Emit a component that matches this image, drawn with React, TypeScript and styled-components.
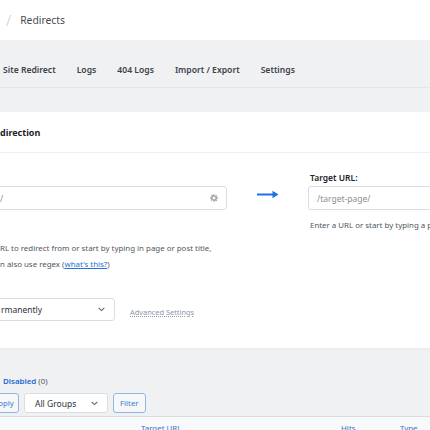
import React from 'react';
import styled, { createGlobalStyle } from 'styled-components';

const GlobalStyle = createGlobalStyle`
  html, body {
    margin: 0;
    padding: 0;
    background: #f0f1f3;
    overflow: hidden;
  }
  body {
    font-family: 'Noto Sans', 'Open Sans', sans-serif;
    color: #3c434a;
  }
`;

const Gear = () => (
  <svg width="8" height="8" viewBox="0 0 24 24" fill="#a9acb0">
    <path d="M10 1h4l.6 3.2 2 .9 2.7-1.9 2.8 2.8-1.9 2.7.9 2L24 10v4l-3.2.6-.9 2 1.9 2.7-2.8 2.8-2.7-1.9-2 .9L14 23h-4l-.6-3.2-2-.9-2.7 1.9-2.8-2.8 1.9-2.7-.9-2L0 14v-4l3.2-.6.9-2L2.2 4.7 5 1.9l2.7 1.9 2-.9z M12 8a4 4 0 1 0 0 8a4 4 0 1 0 0-8z" fillRule="evenodd" />
  </svg>
);

const Chevron = () => (
  <svg width="7" height="5" viewBox="0 0 10 6" fill="none">
    <path d="M1.5 1.2 5 4.6 8.5 1.2" stroke="#6b7178" strokeWidth="1.6" strokeLinecap="round" strokeLinejoin="round" />
  </svg>
);

const Arrow = () => (
  <svg width="22" height="9" viewBox="0 0 22 9" fill="none">
    <path d="M0 4.5h19" stroke="#1f6fe5" strokeWidth="2" />
    <path d="M15.5 0.8 21.5 4.5 15.5 8.2z" fill="#1f6fe5" />
  </svg>
);

const App: React.FC = () => {
  return (
    <>
      <GlobalStyle />
      <StyledPage>
        <StyledHeader>
          <StyledSlash>/</StyledSlash>
          <StyledTitle>Redirects</StyledTitle>
        </StyledHeader>

        <StyledNav>
          <StyledTab>Site Redirect</StyledTab>
          <StyledTab>Logs</StyledTab>
          <StyledTab>404 Logs</StyledTab>
          <StyledTab>Import / Export</StyledTab>
          <StyledTab>Settings</StyledTab>
        </StyledNav>

        <StyledCard>
          <StyledCardHead>
            <StyledCardTitle>direction</StyledCardTitle>
          </StyledCardHead>
          <StyledCardBody>
            <StyledFields>
              <StyledLabel>Target URL:</StyledLabel>
              <StyledField className="source">
                <StyledPlaceholder>/</StyledPlaceholder>
                <Gear />
              </StyledField>
              <StyledArrowCell>
                <Arrow />
              </StyledArrowCell>
              <StyledField className="target">
                <StyledPlaceholder>/target-page/</StyledPlaceholder>
              </StyledField>
              <StyledHelp className="target">
                Enter a URL or start by typing a page or post title
              </StyledHelp>
              <StyledHelp className="source">
                RL to redirect from or start by typing in page or post title,
                <br />
                n also use regex (<StyledLink>what's this?</StyledLink>)
              </StyledHelp>
            </StyledFields>

            <StyledOptions>
              <StyledSelect $width={125}>
                <span>rmanently</span>
                <Chevron />
              </StyledSelect>
              <StyledAdvanced>Advanced Settings</StyledAdvanced>
            </StyledOptions>
          </StyledCardBody>
        </StyledCard>

        <StyledList>
          <StyledStatus>
            <StyledStatusLink>Disabled</StyledStatusLink> (0)
          </StyledStatus>
          <StyledFilters>
            <StyledButton className="apply">Apply</StyledButton>
            <StyledSelect $width={84} $height={20}>
              <span>All Groups</span>
              <Chevron />
            </StyledSelect>
            <StyledButton>Filter</StyledButton>
          </StyledFilters>
        </StyledList>

        <StyledTableHead>
          <StyledColumn>Target URL</StyledColumn>
          <StyledColumn>Hits</StyledColumn>
          <StyledColumn>Type</StyledColumn>
        </StyledTableHead>
      </StyledPage>
    </>
  );
};

const StyledPage = styled.div`
  width: 430px;
  height: 430px;
  overflow: hidden;
  display: flex;
  flex-direction: column;
  background: #f0f1f3;
`;

const StyledHeader = styled.div`
  height: 40px;
  flex-shrink: 0;
  display: flex;
  align-items: center;
  gap: 9px;
  padding-left: 6px;
  background: #fff;
`;

const StyledSlash = styled.span`
  font-size: 15px;
  font-weight: 300;
  color: #c9cbcf;
`;

const StyledTitle = styled.span`
  font-size: 10.3px;
  color: #454b52;
`;

const StyledNav = styled.nav`
  height: 48px;
  flex-shrink: 0;
  display: flex;
  align-items: center;
  gap: 21px;
  padding: 12px 0 0 3px;
  border-bottom: 1px solid #e4e6e9;
  box-sizing: border-box;
`;

const StyledTab = styled.span`
  font-size: 8.6px;
  font-weight: 600;
  color: #3c434a;
  white-space: nowrap;
`;

const StyledCard = styled.section`
  margin-top: 24px;
  height: 236px;
  flex-shrink: 0;
  background: #fff;
  box-shadow: 0 1px 2px rgba(0, 0, 0, 0.04);
`;

const StyledCardHead = styled.div`
  height: 41px;
  display: flex;
  align-items: center;
  border-bottom: 1px solid #eeeff1;
  box-sizing: border-box;
`;

const StyledCardTitle = styled.h2`
  margin: 0;
  font-size: 9px;
  font-weight: 700;
  color: #1d2327;
`;

const StyledCardBody = styled.div`
  padding-top: 19px;
`;

const StyledFields = styled.div`
  width: 600px;
  margin-left: -10px;
  display: grid;
  grid-template-columns: 237px 81px 1fr;
  grid-template-areas:
    '. . label'
    'source arrow target'
    'shelp . thelp';
`;

const StyledLabel = styled.label`
  grid-area: label;
  font-size: 8.5px;
  font-weight: 600;
  line-height: 12px;
  color: #1d2327;
  margin: 0 0 2px 2px;
`;

const StyledField = styled.div`
  height: 24px;
  box-sizing: border-box;
  border: 1px solid #dcdde0;
  border-radius: 3px;
  background: #fff;
  display: flex;
  align-items: center;
  justify-content: space-between;

  &.source {
    grid-area: source;
    padding: 0 8px 0 9px;
  }

  &.target {
    grid-area: target;
    padding-left: 8px;
  }
`;

const StyledPlaceholder = styled.span`
  font-size: 8.5px;
  color: #8c8f94;
`;

const StyledArrowCell = styled.div`
  grid-area: arrow;
  display: flex;
  align-items: center;
  justify-content: center;
  padding-bottom: 8px;
`;

const StyledHelp = styled.p`
  margin: 0;
  font-size: 7.9px;
  color: #50575e;

  &.target {
    grid-area: thelp;
    margin: 9px 0 0 2px;
    line-height: 12px;
    white-space: nowrap;
  }

  &.source {
    grid-area: shelp;
    margin: 30px 0 0 10px;
    line-height: 16px;
    white-space: nowrap;
  }
`;

const StyledLink = styled.a`
  color: #2271d6;
  text-decoration: underline;
`;

const StyledOptions = styled.div`
  display: flex;
  align-items: center;
  gap: 15px;
  margin: 26px 0 0 -10px;
`;

const StyledSelect = styled.div<{ $width: number; $height?: number }>`
  width: ${({ $width }) => $width}px;
  height: ${({ $height }) => $height ?? 23}px;
  box-sizing: border-box;
  border: 1px solid #dcdde0;
  border-radius: 3px;
  background: #fff;
  display: flex;
  align-items: center;
  justify-content: space-between;
  padding: 0 9px 0 8px;
  font-size: 8.5px;
  color: #2c3338;
  flex-shrink: 0;

  span {
    padding-left: 2px;
  }
`;

const StyledAdvanced = styled.span`
  font-size: 7.4px;
  color: #8b97aa;
  text-decoration: underline dotted;
  margin-top: 5px;
`;

const StyledList = styled.div`
  padding-top: 27px;
  height: 69px;
  flex-shrink: 0;
  box-sizing: border-box;
  border-bottom: 1px solid #dcdde0;
`;

const StyledStatus = styled.div`
  font-size: 7.9px;
  line-height: 12px;
  color: #50575e;
  padding-left: 3px;
`;

const StyledStatusLink = styled.span`
  font-weight: 600;
  color: #2667d8;
`;

const StyledFilters = styled.div`
  display: flex;
  align-items: center;
  gap: 5px;
  margin-top: 6px;
`;

const StyledButton = styled.button`
  height: 20px;
  padding: 0 6px;
  box-sizing: border-box;
  border: 1px solid #92b6e2;
  border-radius: 3px;
  background: #f6f7f8;
  font-family: inherit;
  font-size: 7.8px;
  color: #3f7bd0;

  &.apply {
    width: 31px;
    margin-left: -12px;
    padding: 0;
  }
`;

const StyledTableHead = styled.div`
  flex: 1;
  display: grid;
  grid-template-columns: 200px 59px 1fr;
  padding: 6px 0 0 141px;
  background: #f8f9fa;
`;

const StyledColumn = styled.span`
  font-size: 7.9px;
  color: #3f72c6;
`;

export default App;
